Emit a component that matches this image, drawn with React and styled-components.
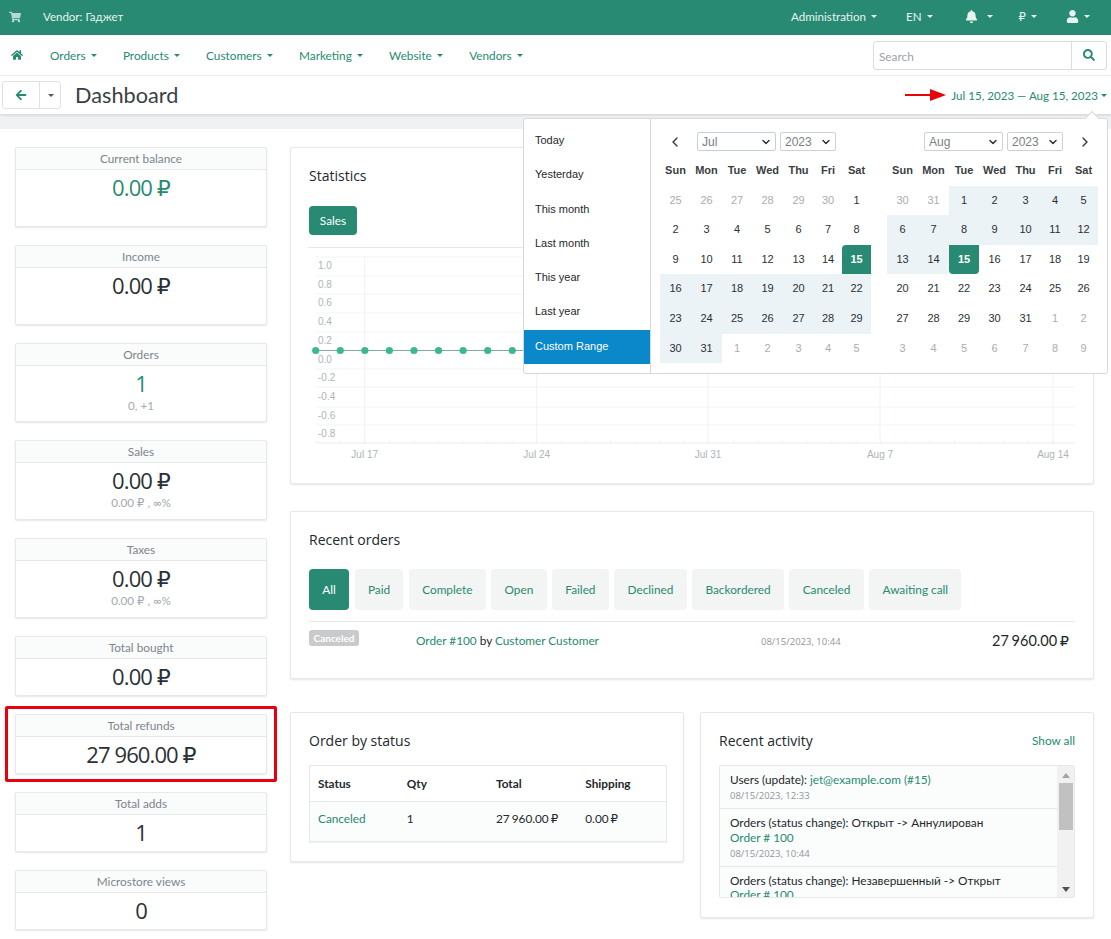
import React from "react";
import styled, { createGlobalStyle } from "styled-components";
import {
  FaShoppingCart,
  FaHome,
  FaArrowLeft,
  FaBell,
  FaUser,
  FaSearch,
} from "react-icons/fa";
import { LuChevronDown, LuChevronLeft, LuChevronRight } from "react-icons/lu";

const GREEN = "#288a72";
const UI_FONT = 'Lato, "Open Sans", "DejaVu Sans", sans-serif';
const HEAD_FONT = '"Open Sans", "DejaVu Sans", sans-serif';
const ARIAL = '"Liberation Sans", Arial, sans-serif';

const GlobalStyle = createGlobalStyle`
  * { box-sizing: border-box; }
  html, body { margin: 0; padding: 0; background: #fff; }
  body {
    font-family: ${UI_FONT};
    font-size: 11.8px;
    color: #23282c;
    overflow: hidden;
  }
`;

const Page = styled.div`
  position: relative;
  width: 1111px;
  height: 939px;
  overflow: hidden;
`;

const TopBar = styled.header`
  display: flex;
  align-items: center;
  height: 35px;
  padding: 0 21px 2px 9px;
  background: ${GREEN};
  color: #e6f3ef;
`;

const CartIcon = styled(FaShoppingCart)`
  width: 12px;
  height: 12px;
  margin-right: 22px;
  opacity: 0.75;
`;

const VendorName = styled.span`
  flex: 1;
  font-size: 11.5px;
`;

const TopItem = styled.span`
  display: inline-flex;
  align-items: center;
  margin-left: ${(p) => p.$gap}px;
  font-size: 11.6px;
  svg {
    width: 13px;
    height: 13px;
  }
`;

const Caret = styled.i`
  display: inline-block;
  margin-left: ${(p) => p.$gap || 5}px;
  border-top: 3px solid currentColor;
  border-left: 3px solid transparent;
  border-right: 3px solid transparent;
`;

const NavBar = styled.nav`
  display: flex;
  align-items: center;
  height: 41px;
  padding: 0 4px 0 11px;
  background: #fff;
  border-bottom: 1px solid #f0f2f3;
  color: ${GREEN};
`;

const HomeIcon = styled(FaHome)`
  width: 12px;
  height: 12px;
  margin-right: 27px;
`;

const NavItem = styled.span`
  display: inline-flex;
  align-items: center;
  margin-right: 26.3px;
`;

const SearchGroup = styled.div`
  display: flex;
  height: 29px;
  width: 234px;
  margin-left: auto;
  border: 1px solid #d9dde0;
  border-radius: 3px;
`;

const SearchField = styled.div`
  flex: 1;
  padding-left: 5px;
  line-height: 29px;
  color: #9aa1a8;
  border-right: 1px solid #d9dde0;
`;

const SearchButton = styled.div`
  display: flex;
  width: 34px;
  align-items: center;
  justify-content: center;
  color: ${GREEN};
  svg {
    width: 12px;
    height: 12px;
  }
`;

const TitleBar = styled.div`
  position: relative;
  z-index: 1;
  display: flex;
  align-items: center;
  height: 38px;
  padding: 0 3px 0 2px;
  background: #fff;
  box-shadow: 0 1px 3px rgba(0, 0, 0, 0.14);
`;

const BackGroup = styled.div`
  display: flex;
  width: 59px;
  height: 28px;
  margin-right: 14px;
  border: 1px solid #dfe2e5;
  border-radius: 3px;
`;

const BackButton = styled.div`
  display: flex;
  width: 37px;
  align-items: center;
  justify-content: center;
  color: ${GREEN};
  border-right: 1px solid #dfe2e5;
  svg {
    width: 12px;
    height: 12px;
  }
`;

const BackCaret = styled.div`
  display: flex;
  flex: 1;
  align-items: center;
  justify-content: center;
  color: #555;
`;

const PageTitle = styled.h1`
  margin: 0 0 1px;
  font-size: 21.7px;
  font-weight: 400;
  color: #3a3f44;
`;

const DateRange = styled.div`
  display: flex;
  align-items: center;
  margin-left: auto;
  padding-right: 1px;
  font-size: 11.6px;
  color: ${GREEN};
`;

const RangeArrow = styled.svg`
  width: 41px;
  height: 14px;
  margin-right: 5px;
`;

const Band = styled.div`
  height: 15px;
  background: #f0f1f2;
`;

const Content = styled.main`
  display: flex;
  gap: 23px;
  padding: 18px 0 0 15px;
`;

const KpiColumn = styled.div`
  display: flex;
  flex-direction: column;
  gap: 18px;
  width: 252px;
`;

const Kpi = styled.section`
  position: relative;
  height: ${(p) => (p.$tall ? "79.75px" : "60px")};
  background: #fff;
  border: 1px solid #e6e8ea;
  border-radius: 2px;
  box-shadow: 0 1px 2px rgba(0, 0, 0, 0.1);
  text-align: center;

  ${(p) =>
    p.$flagged &&
    `&::after {
      content: "";
      position: absolute;
      inset: -9px -11px;
      border: 3px solid #e8000b;
      border-radius: 2px;
    }`}
`;

const KpiHead = styled.div`
  height: 22px;
  line-height: 21px;
  background: #fafbfb;
  border-bottom: 1px solid #e6e8ea;
  color: #7d858c;
`;

const KpiValue = styled.div`
  margin-top: 2px;
  line-height: 30px;
  font-family: ${HEAD_FONT};
  font-size: 22px;
  letter-spacing: -0.9px;
  color: ${(p) => (p.$accent ? GREEN : "#2a3136")};
`;

const KpiSub = styled.div`
  margin-top: 1px;
  line-height: 14px;
  font-size: 11.6px;
  color: #a3a9ae;
`;

const MainColumn = styled.div`
  display: flex;
  flex-direction: column;
  width: 804px;
`;

const Card = styled.section`
  flex: ${(p) => (p.$half ? "0 0 394px" : "none")};
  min-width: 0;
  height: ${(p) => p.$height}px;
  margin-bottom: ${(p) => p.$after || 0}px;
  padding: 17px 18px;
  background: #fff;
  border: 1px solid #e6e8ea;
  border-radius: 2px;
  box-shadow: 0 1px 2px rgba(0, 0, 0, 0.1);
`;

const CardHead = styled.div`
  display: flex;
  align-items: center;
  justify-content: space-between;
  height: 20px;
`;

const CardTitle = styled.h2`
  margin: 0;
  font-family: ${HEAD_FONT};
  font-size: 14px;
  font-weight: 500;
  color: #23282c;
`;

const TextLink = styled.a`
  color: ${GREEN};
`;

const SalesButton = styled.div`
  width: 48px;
  height: 29px;
  margin-top: 21px;
  line-height: 29px;
  text-align: center;
  border-radius: 4px;
  background: ${GREEN};
  color: #fff;
`;

const ChartFrame = styled.div`
  margin: 12px 0 0 -1px;
  border-top: 1px solid #e6e8ea;
`;

const ChartSvg = styled.svg`
  display: block;
  width: 768px;
  height: 220px;
  margin-top: 2px;
`;

const Tabs = styled.div`
  display: flex;
  gap: 5.5px;
  margin-top: 20px;
  padding-bottom: 11px;
  border-bottom: 1px solid #e6e8ea;
`;

const Tab = styled.div`
  height: 41px;
  padding: 0 13.3px;
  line-height: 41px;
  border-radius: 4px;
  background: ${(p) => (p.$active ? GREEN : "#f3f4f4")};
  color: ${(p) => (p.$active ? "#fff" : GREEN)};
`;

const OrderRow = styled.div`
  display: grid;
  grid-template-columns: 107px 345px 1fr auto;
  align-items: start;
  padding: 8px 6px 0 0;
`;

const StatusBadge = styled.span`
  justify-self: start;
  width: 50px;
  line-height: 16px;
  text-align: center;
  border-radius: 3px;
  background: #c8cacc;
  color: #fff;
  font-size: 10px;
  font-weight: 700;
`;

const OrderText = styled.div`
  padding-top: 2px;
  line-height: 17px;
`;

const OrderDate = styled.div`
  padding-top: 3px;
  line-height: 17px;
  font-family: ${HEAD_FONT};
  font-size: 9.5px;
  color: #8f969c;
`;

const OrderAmount = styled.div`
  line-height: 22px;
  font-size: 14.5px;
  word-spacing: -1px;
`;

const BottomRow = styled.div`
  display: flex;
  align-items: flex-start;
  gap: 16px;
  margin-top: 33px;
`;

const StatusTable = styled.table`
  width: 358px;
  margin-top: 15px;
  border-collapse: collapse;
  table-layout: fixed;
  border: 1px solid #e6e8ea;
  box-shadow: 0 1px 1px rgba(0, 0, 0, 0.05);

  th {
    height: 36px;
    padding: 0 8px;
    text-align: left;
    font-weight: 700;
    border-bottom: 1px solid #e6e8ea;
  }
  td {
    height: 40px;
    padding: 0 8px 6px;
    background: #fbfcfc;
    word-spacing: -1px;
  }
`;

const ActivityBox = styled.div`
  display: flex;
  height: 133px;
  margin-top: 15px;
  overflow: hidden;
  border: 1px solid #e6e8ea;
  border-radius: 2px;
`;

const ActivityList = styled.div`
  flex: 1;
  overflow: hidden;
  background: #fbfcfc;
`;

const ActivityItem = styled.div`
  padding: 7px 10px 5px;
  line-height: 14.5px;
  border-bottom: 1px solid #e6e8ea;
`;

const ActivityDate = styled.div`
  margin-top: 1.5px;
  font-family: ${HEAD_FONT};
  font-size: 9.5px;
  line-height: 14px;
  color: #8f969c;
`;

const Scrollbar = styled.div`
  display: flex;
  flex-direction: column;
  align-items: center;
  flex: none;
  width: 17px;
  background: #f1f1f1;
`;

const ScrollArrow = styled.i`
  margin: 7px 0 5px;
  border-left: 4px solid transparent;
  border-right: 4px solid transparent;
  ${(p) =>
    p.$down
      ? "border-top: 5px solid #505050; margin-top: auto;"
      : "border-bottom: 5px solid #a3a3a3;"}
`;

const ScrollThumb = styled.div`
  width: 14px;
  height: 47px;
  background: #c1c1c1;
`;

const Picker = styled.div`
  position: absolute;
  z-index: 2;
  top: 118px;
  left: 523px;
  display: flex;
  width: 585px;
  height: 256px;
  background: #fff;
  border: 1px solid #d5d8da;
  border-radius: 3px;
  font-family: ${ARIAL};
  font-size: 11px;

  &::before {
    content: "";
    position: absolute;
    top: -6px;
    right: 10px;
    width: 9px;
    height: 9px;
    background: #fff;
    border-top: 1px solid #d5d8da;
    border-left: 1px solid #d5d8da;
    transform: rotate(45deg);
  }
`;

const Ranges = styled.ul`
  width: 127px;
  margin: 0;
  padding: 5px 0 0;
  list-style: none;
  border-right: 1px solid #d5d8da;
`;

const RangeItem = styled.li`
  height: 34.3px;
  padding-left: 11px;
  line-height: 33.6px;
  color: ${(p) => (p.$active ? "#fff" : "#23282c")};
  background: ${(p) => (p.$active ? "#0a88c9" : "transparent")};
`;

const Calendars = styled.div`
  position: relative;
  z-index: 1;
  display: flex;
  gap: 16px;
  padding: 13px 0 0 9px;
`;

const Month = styled.div`
  width: 211px;
`;

const MonthHead = styled.div`
  display: flex;
  align-items: center;
  gap: 4px;
  height: 19px;
  margin-bottom: 5px;
  color: #333;
  svg.nav {
    width: 16px;
    height: 16px;
    stroke-width: 2;
  }
`;

const PrevSlot = styled.span`
  display: flex;
  width: 33px;
  padding-left: 7px;
`;

const NextSlot = styled.span`
  display: flex;
  justify-content: center;
  flex: 1;
  padding-left: 4px;
`;

const SelectBox = styled.div`
  display: flex;
  align-items: center;
  justify-content: space-between;
  width: ${(p) => p.$width}px;
  height: 19px;
  margin-left: ${(p) => p.$offset || 0}px;
  padding: 0 3px 0 4px;
  border: 1px solid ${(p) => (p.$focus ? "#c3d0dc" : "#cfd2d4")};
  border-radius: 2px;
  color: #7a7f84;
  font-size: 12px;
  svg {
    width: 12px;
    height: 12px;
    stroke-width: 3;
    color: #333;
  }
`;

const DayGrid = styled.div`
  display: grid;
  grid-template-columns: 31px 31px 30px 31px 31px 28px 29px;
  grid-auto-rows: 29.6px;
  text-align: center;
  line-height: 29.6px;
`;

const DayName = styled.div`
  font-weight: 700;
  color: #3a3f44;
`;

const Day = styled.div`
  color: ${(p) => (p.$muted ? "#a9adb1" : "#2b3035")};
  background: ${(p) => (p.$inRange ? "#ebf3f6" : "transparent")};

  ${(p) =>
    p.$edge &&
    `background: ${GREEN};
     color: #fff;
     font-weight: 700;
     border-radius: ${p.$edge === "start" ? "4px 0 0 0" : "0 0 4px 4px"};`}
`;

const NAV_ITEMS = ["Orders", "Products", "Customers", "Marketing", "Website", "Vendors"];
const DAY_NAMES = ["Sun", "Mon", "Tue", "Wed", "Thu", "Fri", "Sat"];
const RANGES = ["Today", "Yesterday", "This month", "Last month", "This year", "Last year", "Custom Range"];
const TABS = ["All", "Paid", "Complete", "Open", "Failed", "Declined", "Backordered", "Canceled", "Awaiting call"];

const KPIS = [
  { label: "Current balance", value: "0.00 ₽", tall: true, accent: true },
  { label: "Income", value: "0.00 ₽", tall: true },
  { label: "Orders", value: "1", sub: "0, +1", tall: true, accent: true },
  { label: "Sales", value: "0.00 ₽", sub: "0.00 ₽ , ∞%", tall: true },
  { label: "Taxes", value: "0.00 ₽", sub: "0.00 ₽ , ∞%", tall: true },
  { label: "Total bought", value: "0.00 ₽" },
  { label: "Total refunds", value: "27 960.00 ₽", flagged: true },
  { label: "Total adds", value: "1" },
  { label: "Microstore views", value: "0" },
];

// day list for a month view: [number, muted]
const buildDays = (lead, count, tail) => [
  ...lead.map((d) => [d, true]),
  ...Array.from({ length: count }, (_, i) => [i + 1, false]),
  ...tail.map((d) => [d, true]),
];

const JULY = buildDays([25, 26, 27, 28, 29, 30], 31, [1, 2, 3, 4, 5]);
const AUGUST = buildDays([30, 31], 31, [1, 2, 3, 4, 5, 6, 7, 8, 9]);

const Calendar = ({ days, inRange, edge, head }) => (
  <Month>
    <MonthHead>{head}</MonthHead>
    <DayGrid>
      {DAY_NAMES.map((n) => (
        <DayName key={n}>{n}</DayName>
      ))}
      {days.map(([d, muted], i) => (
        <Day
          key={i}
          $muted={muted}
          $inRange={inRange(d, muted)}
          $edge={!muted && d === 15 ? edge : undefined}
        >
          {d}
        </Day>
      ))}
    </DayGrid>
  </Month>
);

const Y_LABELS = ["1.0", "0.8", "0.6", "0.4", "0.2", "0.0", "-0.2", "-0.4", "-0.6", "-0.8"];
const GRID_Y = [257, 276, 294, 313, 332, 369, 387, 407, 425, 443];
const X_LABELS = [
  ["Jul 17", 364.7],
  ["Jul 24", 536.7],
  ["Jul 31", 708],
  ["Aug 7", 880],
  ["Aug 14", 1053],
];
const POINTS = Array.from({ length: 32 }, (_, i) => 315.7 + i * 24.57);

const Chart = () => (
  <ChartSvg viewBox="308 250 768 220">
    {GRID_Y.map((y) => (
      <line key={y} x1="316" x2="1075" y1={y} y2={y} stroke={y === 443 ? "#e8ebed" : "#f1f3f4"} />
    ))}
    {X_LABELS.map(([, x]) => (
      <line key={x} x1={x} x2={x} y1="257" y2="443" stroke="#f0f2f3" />
    ))}
    {POINTS.map((x) => (
      <line key={x} x1={x} x2={x} y1="441" y2="443" stroke="#e8ebed" />
    ))}
    {Y_LABELS.map((label, i) => (
      <text key={label} x="318" y={269 + i * 18.7} fontFamily={ARIAL} fontSize="10" fill="#aeb4b9">
        {label}
      </text>
    ))}
    {X_LABELS.map(([label, x]) => (
      <text key={label} x={x} y="458" textAnchor="middle" fontFamily={ARIAL} fontSize="10" fill="#aeb4b9">
        {label}
      </text>
    ))}
    <line x1="316" x2="1077" y1="350.5" y2="350.5" stroke="#83a99b" strokeWidth="1.2" />
    {POINTS.map((x) => (
      <circle key={x} cx={x} cy="350.5" r="3.6" fill="#3cb98a" />
    ))}
  </ChartSvg>
);

const App = () => (
  <Page>
    <GlobalStyle />
    <TopBar>
      <CartIcon />
      <VendorName>Vendor: Гаджет</VendorName>
      <TopItem $gap={0}>
        Administration
        <Caret />
      </TopItem>
      <TopItem $gap={29}>
        EN
        <Caret />
      </TopItem>
      <TopItem $gap={32}>
        <FaBell />
        <Caret $gap={9} />
      </TopItem>
      <TopItem $gap={26}>
        ₽
        <Caret />
      </TopItem>
      <TopItem $gap={29}>
        <FaUser />
        <Caret />
      </TopItem>
    </TopBar>

    <NavBar>
      <HomeIcon />
      {NAV_ITEMS.map((item) => (
        <NavItem key={item}>
          {item}
          <Caret />
        </NavItem>
      ))}
      <SearchGroup>
        <SearchField>Search</SearchField>
        <SearchButton>
          <FaSearch />
        </SearchButton>
      </SearchGroup>
    </NavBar>

    <TitleBar>
      <BackGroup>
        <BackButton>
          <FaArrowLeft />
        </BackButton>
        <BackCaret>
          <Caret $gap={1} />
        </BackCaret>
      </BackGroup>
      <PageTitle>Dashboard</PageTitle>
      <DateRange>
        <RangeArrow viewBox="0 0 41 14">
          <path d="M0 6h25v2H0z" fill="#e8000b" />
          <path d="M25 1l16 6-16 6z" fill="#e8000b" />
        </RangeArrow>
        Jul 15, 2023 — Aug 15, 2023
        <Caret $gap={3} />
      </DateRange>
    </TitleBar>
    <Band />

    <Picker>
      <Ranges>
        {RANGES.map((r) => (
          <RangeItem key={r} $active={r === "Custom Range"}>
            {r}
          </RangeItem>
        ))}
      </Ranges>
      <Calendars>
        <Calendar
          days={JULY}
          edge="start"
          inRange={(d, muted) => !muted && d > 15}
          head={
            <>
              <PrevSlot>
                <LuChevronLeft className="nav" />
              </PrevSlot>
              <SelectBox $width={79} $focus>
                Jul
                <LuChevronDown />
              </SelectBox>
              <SelectBox $width={56}>
                2023
                <LuChevronDown />
              </SelectBox>
            </>
          }
        />
        <Calendar
          days={AUGUST}
          edge="end"
          inRange={(d, muted) => !muted && d < 15}
          head={
            <>
              <SelectBox $width={79} $offset={37}>
                Aug
                <LuChevronDown />
              </SelectBox>
              <SelectBox $width={56}>
                2023
                <LuChevronDown />
              </SelectBox>
              <NextSlot>
                <LuChevronRight className="nav" />
              </NextSlot>
            </>
          }
        />
      </Calendars>
    </Picker>

    <Content>
      <KpiColumn>
        {KPIS.map((k) => (
          <Kpi key={k.label} $tall={k.tall} $flagged={k.flagged}>
            <KpiHead>{k.label}</KpiHead>
            <KpiValue $accent={k.accent}>{k.value}</KpiValue>
            {k.sub && <KpiSub>{k.sub}</KpiSub>}
          </Kpi>
        ))}
      </KpiColumn>

      <MainColumn>
        <Card $height={337} $after={27}>
          <CardHead>
            <CardTitle>Statistics</CardTitle>
          </CardHead>
          <SalesButton>Sales</SalesButton>
          <ChartFrame>
            <Chart />
          </ChartFrame>
        </Card>

        <Card $height={168}>
          <CardHead>
            <CardTitle>Recent orders</CardTitle>
          </CardHead>
          <Tabs>
            {TABS.map((t) => (
              <Tab key={t} $active={t === "All"}>
                {t}
              </Tab>
            ))}
          </Tabs>
          <OrderRow>
            <StatusBadge>Canceled</StatusBadge>
            <OrderText>
              <TextLink>Order #100</TextLink> by <TextLink>Customer Customer</TextLink>
            </OrderText>
            <OrderDate>08/15/2023, 10:44</OrderDate>
            <OrderAmount>27 960.00 ₽</OrderAmount>
          </OrderRow>
        </Card>

        <BottomRow>
          <Card $half $height={150}>
            <CardHead>
              <CardTitle>Order by status</CardTitle>
            </CardHead>
            <StatusTable>
              <thead>
                <tr>
                  <th>Status</th>
                  <th>Qty</th>
                  <th>Total</th>
                  <th>Shipping</th>
                </tr>
              </thead>
              <tbody>
                <tr>
                  <td>
                    <TextLink>Canceled</TextLink>
                  </td>
                  <td>1</td>
                  <td>27 960.00 ₽</td>
                  <td>0.00 ₽</td>
                </tr>
              </tbody>
            </StatusTable>
          </Card>

          <Card $half $height={206}>
            <CardHead>
              <CardTitle>Recent activity</CardTitle>
              <TextLink>Show all</TextLink>
            </CardHead>
            <ActivityBox>
              <ActivityList>
                <ActivityItem>
                  Users (update): <TextLink>jet@example.com (#15)</TextLink>
                  <ActivityDate>08/15/2023, 12:33</ActivityDate>
                </ActivityItem>
                <ActivityItem>
                  Orders (status change): Открыт -&gt; Аннулирован
                  <br />
                  <TextLink>Order # 100</TextLink>
                  <ActivityDate>08/15/2023, 10:44</ActivityDate>
                </ActivityItem>
                <ActivityItem>
                  Orders (status change): Незавершенный -&gt; Открыт
                  <br />
                  <TextLink>Order # 100</TextLink>
                </ActivityItem>
              </ActivityList>
              <Scrollbar>
                <ScrollArrow />
                <ScrollThumb />
                <ScrollArrow $down />
              </Scrollbar>
            </ActivityBox>
          </Card>
        </BottomRow>
      </MainColumn>
    </Content>
  </Page>
);

export default App;
